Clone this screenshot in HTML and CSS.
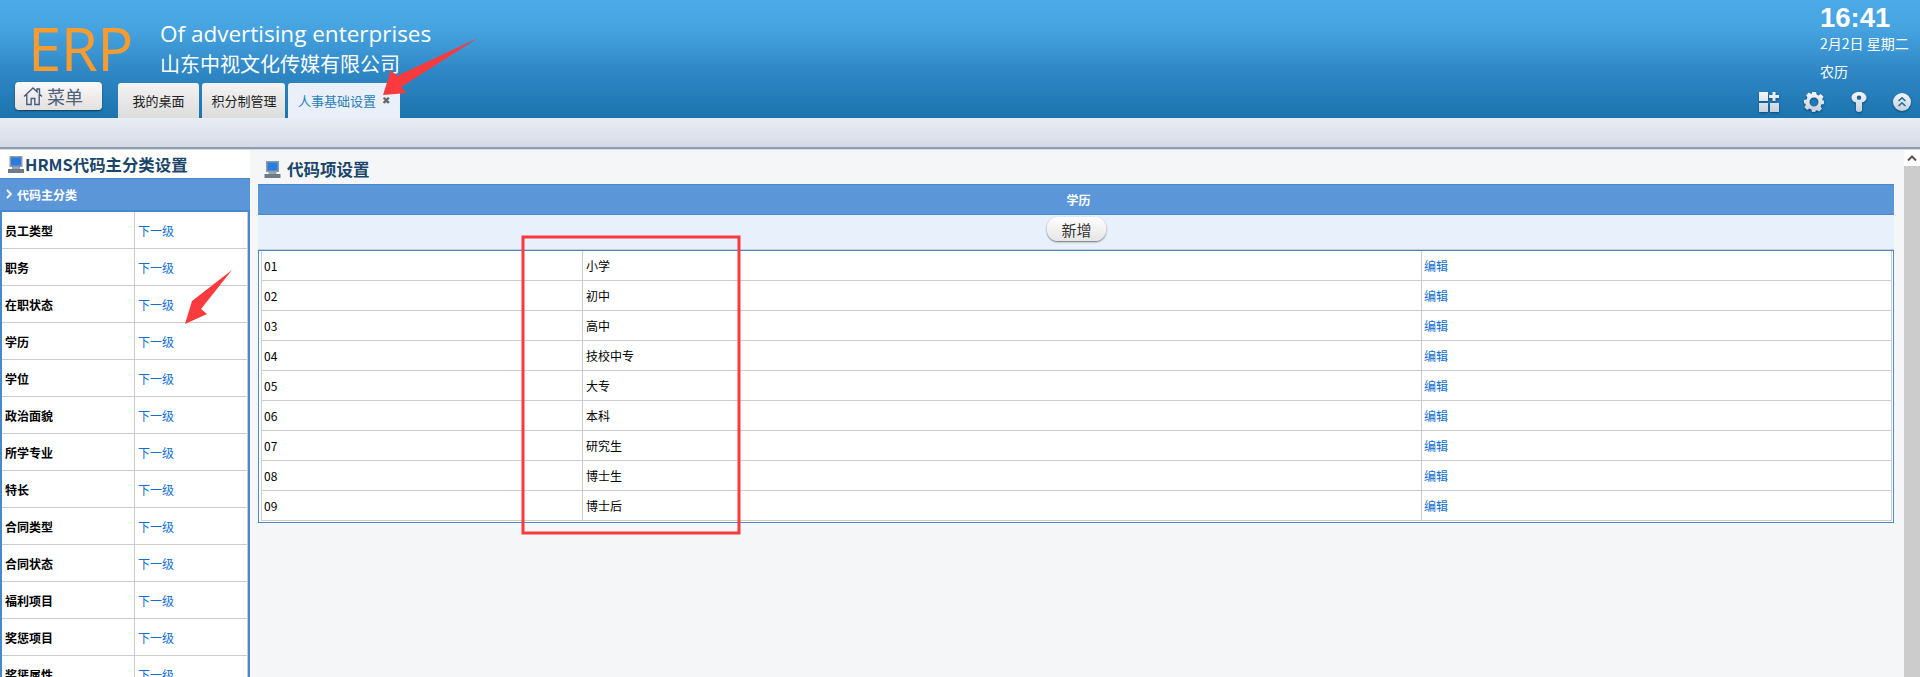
FILE: index.html
```html
<!DOCTYPE html>
<html lang="zh">
<head>
<meta charset="utf-8">
<title>人事基础设置</title>
<link rel="stylesheet" href="styles.css">
</head>
<body>
<header class="top">
  <div class="top-left">
    <div class="brand">
      <div class="erp">ERP</div>
      <div class="brand-text">
        <div class="en">Of advertising enterprises</div>
        <div class="cn">山东中视文化传媒有限公司</div>
      </div>
    </div>
    <div class="nav">
      <button class="menu-btn">
        <svg class="home" viewBox="0 0 20 20"><path d="M1 10.500 10 2l4 3.800V3h2.500v5.200L19 10.500M3.800 8.500V18.500h4.400v-6h3.600v6h4.400V8.500" fill="none" stroke="#44607f" stroke-width="1.400"/></svg>
        <span>菜单</span>
      </button>
      <div class="tabs">
        <div class="tab tab-a">我的桌面</div>
        <div class="tab tab-b">积分制管理</div>
        <div class="tab tab-active">人事基础设置<span class="close">✖</span></div>
      </div>
    </div>
  </div>
  <div class="top-right">
    <div class="time">16:41</div>
    <div class="date">2月2日 星期二</div>
    <div class="lunar">农历</div>
    <div class="tools">
      <svg class="tool" viewBox="0 0 20 20"><defs><linearGradient id="g" x1="0" y1="0" x2="0" y2="1"><stop offset="0" stop-color="#f4f6fa"/><stop offset="1" stop-color="#c6d0dc"/></linearGradient></defs><path d="M0 0h9v9H0zM0 11h9v9H0zM11 11h9v9h-9zM13.500 0h3v3h3.500v3h-3.500v3h-3V6H10V3h3.500z" fill="url(#g)"/></svg>
      <svg class="tool" viewBox="0 0 20 20"><path d="M8 0h4l.6 2.600 1.900.8 2.300-1.400 2.800 2.800-1.400 2.300.8 1.900L20 8v4l-2.600.6-.8 1.900 1.400 2.300-2.800 2.800-2.300-1.400-1.900.8L12 20H8l-.6-2.600-1.900-.8-2.300 1.400-2.800-2.800 1.400-2.300-.8-1.900L0 12V8l2.600-.6.8-1.900L2 3.200 4.800.4l2.300 1.400 1-.4zM10 5.500a4.500 4.500 0 1 0 0 9 4.500 4.500 0 0 0 0-9z" fill="url(#g)" fill-rule="evenodd"/></svg>
      <svg class="tool" viewBox="0 0 20 20"><path d="M10 0c4.500 0 7.500 2.500 7.500 5.500S15 10 13 10.500V18c0 1.200-1.300 2-3 2s-3-.8-3-2v-7.500C5 10 2.500 8.500 2.500 5.500S5.500 0 10 0zm0 3.500a2.200 2.200 0 1 0 0 4.400 2.200 2.200 0 0 0 0-4.400z" fill="url(#g)" fill-rule="evenodd"/></svg>
      <svg class="tool tool-small" viewBox="0 0 18 18"><circle cx="9" cy="9" r="9" fill="url(#g)"/><path d="M5.500 8 9 4.800 12.500 8M5.500 13 9 9.800l3.500 3.200" fill="none" stroke="#2a6f9f" stroke-width="1.600"/></svg>
    </div>
  </div>
</header>
<div class="subbar"></div>
<div class="content">
  <aside class="side">
    <h2 class="side-title">
      <svg class="pc" viewBox="0 0 16 18"><rect x="1.500" y="1" width="13" height="11" fill="#8c99a6"/><rect x="3" y="2.500" width="10" height="8" fill="#2a7de0"/><rect x="4" y="12" width="8" height="2" fill="#9aa5b0"/><rect x="0" y="14" width="16" height="4" fill="#6d7b88"/></svg>
      <span>HRMS代码主分类设置</span>
    </h2>
    <div class="side-box">
      <div class="side-head"><svg class="chev" viewBox="0 0 6 10"><path d="M1 1l4 4-4 4" fill="none" stroke="#fff" stroke-width="1.800"/></svg>代码主分类</div>
      <div class="side-row"><b>员工类型</b><a>下一级</a></div>
      <div class="side-row"><b>职务</b><a>下一级</a></div>
      <div class="side-row"><b>在职状态</b><a>下一级</a></div>
      <div class="side-row"><b>学历</b><a>下一级</a></div>
      <div class="side-row"><b>学位</b><a>下一级</a></div>
      <div class="side-row"><b>政治面貌</b><a>下一级</a></div>
      <div class="side-row"><b>所学专业</b><a>下一级</a></div>
      <div class="side-row"><b>特长</b><a>下一级</a></div>
      <div class="side-row"><b>合同类型</b><a>下一级</a></div>
      <div class="side-row"><b>合同状态</b><a>下一级</a></div>
      <div class="side-row"><b>福利项目</b><a>下一级</a></div>
      <div class="side-row"><b>奖惩项目</b><a>下一级</a></div>
      <div class="side-row"><b>奖惩属性</b><a>下一级</a></div>
    </div>
  </aside>
  <main class="main">
    <h2 class="main-title">
      <svg class="pc pc-large" viewBox="0 0 16 18"><rect x="1.500" y="1" width="13" height="11" fill="#8c99a6"/><rect x="3" y="2.500" width="10" height="8" fill="#2a7de0"/><rect x="4" y="12" width="8" height="2" fill="#9aa5b0"/><rect x="0" y="14" width="16" height="4" fill="#6d7b88"/></svg>
      <span>代码项设置</span>
    </h2>
    <div class="main-head">学历</div>
    <div class="toolbar"><button class="add">新增</button></div>
    <div class="grid-wrap">
      <div class="g-row"><span>01</span><span>小学</span><a>编辑</a></div>
      <div class="g-row"><span>02</span><span>初中</span><a>编辑</a></div>
      <div class="g-row"><span>03</span><span>高中</span><a>编辑</a></div>
      <div class="g-row"><span>04</span><span>技校中专</span><a>编辑</a></div>
      <div class="g-row"><span>05</span><span>大专</span><a>编辑</a></div>
      <div class="g-row"><span>06</span><span>本科</span><a>编辑</a></div>
      <div class="g-row"><span>07</span><span>研究生</span><a>编辑</a></div>
      <div class="g-row"><span>08</span><span>博士生</span><a>编辑</a></div>
      <div class="g-row"><span>09</span><span>博士后</span><a>编辑</a></div>
    </div>
  </main>
  <div class="scrollbar">
    <div class="sb-up"><svg viewBox="0 0 10 6"><path d="M1 5.500 5 1.500l4 4" fill="none" stroke="#555" stroke-width="2"/></svg></div>
    <div class="sb-thumb"></div>
  </div>
</div>
<svg class="marks" viewBox="0 0 1920 677">
  <path d="M383 95 407 93 401 87 478 38 397 76 391 70z" fill="#fb3a3d"/>
  <path d="M232 270 192 301 185 324 207 314 201 309z" fill="#fb3a3d"/>
  <rect x="523" y="237" width="216" height="296" fill="none" stroke="#f83a3d" stroke-width="3"/>
</svg>
</body>
</html>
```
FILE: styles.css
```css
* { box-sizing: border-box; }
html, body { margin: 0; height: 100%; overflow: hidden; }
body {
  position: relative;
  font-family: "Noto Sans CJK SC", "Open Sans", sans-serif;
  font-size: 12px;
  color: #000;
  background: #f5f6f8;
  display: flex;
  flex-direction: column;
  height: 677px;
}
h2 { margin: 0; }
a { color: #0f6fd2; }
button { font-family: inherit; padding: 0; }

.top {
  height: 118px;
  flex: none;
  display: flex;
  justify-content: space-between;
  background: linear-gradient(#4baae8 0%, #46a3e0 25%, #2f88c5 60%, #1c74ae 100%);
}
.top-left { display: flex; flex-direction: column; }
.brand { display: flex; height: 83px; padding-left: 28px; }
.erp {
  font-family: "Open Sans", sans-serif;
  font-weight: 400;
  font-size: 60px;
  line-height: 60px;
  margin-top: 18px;
  width: 132px;
  color: #f99c2f;
  letter-spacing: -0.500px;
}
.brand-text { color: #fff; padding-top: 19px; }
.en { font-family: "Open Sans", sans-serif; font-size: 22.500px; line-height: 30px; }
.cn { font-size: 20px; line-height: 30px; }
.nav { display: flex; height: 35px; padding-left: 15px; }
.menu-btn {
  width: 87px;
  height: 28px;
  margin-top: -1px;
  border: 0;
  border-radius: 4px;
  background: linear-gradient(#fafafa, #e4e0de);
  box-shadow: 0 1px 2px rgba(0,0,0,.5);
  color: #4d6178;
  font-size: 18px;
  display: flex;
  align-items: center;
  padding-left: 8px;
  gap: 4px;
}
.home { width: 20px; height: 20px; }
.tabs { display: flex; gap: 3px; margin-left: 16px; }
.tab {
  height: 35px;
  border-radius: 3px 3px 0 0;
  font-size: 13px;
  color: #222;
  background: linear-gradient(#f3f3f3, #dcdcdc);
  display: flex;
  align-items: center;
  justify-content: center;
}
.tab-a { width: 81px; }
.tab-b { width: 83px; padding-left: 1px; }
.tab-active {
  width: 112px;
  background: #e9f0f9;
  color: #2a7fb8;
  justify-content: flex-start;
  padding-left: 10px;
}
.close { font-size: 10px; color: #666; margin-left: 6px; font-family: "DejaVu Sans", sans-serif; }
.top-right {
  color: #fff;
  display: flex;
  flex-direction: column;
  width: 160px;
}
.time {
  font-family: "Liberation Sans", sans-serif;
  font-weight: bold;
  font-size: 27.500px;
  line-height: 27px;
  margin-top: 4px;
  padding-left: 60px;
}
.date { font-size: 14px; line-height: 20px; margin-top: 2px; padding-left: 60px; white-space: nowrap; }
.lunar { font-size: 14px; line-height: 20px; margin-top: 8px; padding-left: 60px; }
.tools {
  display: flex;
  align-items: center;
  margin-top: 11px;
  gap: 25px;
  margin-left: -1px;
}
.tool { width: 20px; height: 20px; filter: drop-shadow(0 1px 1px rgba(0,40,80,.6)); }
.tool-small { width: 18px; height: 18px; margin-left: -1px; }

.subbar {
  height: 31px;
  flex: none;
  margin-bottom: 1px;
  background: linear-gradient(#e9edf6, #d4dae5);
  border-bottom: 2px solid #8f9db0;
  box-shadow: 0 1px 0 #d3dbe6;
}
.content { flex: 1; display: flex; min-height: 0; }

.side { width: 250px; flex: none; background: #fff; }
.side-title {
  height: 28px;
  display: flex;
  align-items: center;
  padding-left: 8px;
  gap: 1px;
  font-size: 16.400px;
  line-height: 28px;
  color: #1b466b;
}
.pc { width: 16px; height: 18px; flex: none; }
.pc-large { width: 17px; height: 18px; }
.side-box { border: solid #4a88cc; border-width: 0 2px; }
.side-head {
  height: 34px;
  background: #5b96d9;
  border-top: 1px solid #4a88cc;
  border-bottom: 2px solid #4a88cc;
  margin: 0 -2px;
  padding: 0 0 1px 6px;
  color: #fff;
  font-weight: bold;
  display: flex;
  align-items: center;
}
.chev { width: 6px; height: 10px; margin-right: 5px; }
.side-row {
  height: 37px;
  display: grid;
  grid-template-columns: 133px 1fr;
  align-items: center;
  border-bottom: 1px solid #ccc;
  border-right: 1px solid #ccc;
}
.side-row b { padding: 1px 0 0 3px; height: 100%; line-height: 36px; border-right: 1px solid #ccc; }
.side-row a { padding: 0 0 0 3px; }

.main { flex: 1; min-width: 0; padding: 0 10px 0 8px; }
.main-title {
  height: 34px;
  display: flex;
  align-items: center;
  padding-left: 6px;
  gap: 6px;
  font-size: 16.500px;
  color: #1b466b;
  padding-top: 4px;
}
.main-head {
  height: 31px;
  background: #5b96d9;
  border-top: 1px solid #4a88cc;
  border-bottom: 1px solid #4a88cc;
  color: #fff;
  font-weight: bold;
  text-align: center;
  line-height: 29px;
  padding-left: 5px;
}
.toolbar {
  height: 35px;
  background: #e8f0fb;
  border-bottom: 1px solid #ccc;
  display: flex;
  justify-content: center;
  align-items: center;
  padding-left: 1px;
}
.add {
  width: 59px;
  height: 24px;
  margin-top: -6px;
  border: 0;
  border-radius: 11px;
  background: linear-gradient(#fff, #e5e5e5);
  box-shadow: 0 1px 2px rgba(0,0,0,.55);
  font-size: 15px;
  color: #333;
}
.grid-wrap {
  border: 1px solid #4a88cc;
  padding: 0 1px 1px 2px;
  background: #fff;
}
.g-row {
  height: 30px;
  display: grid;
  grid-template-columns: 320px 840px 1fr;
  align-items: center;
  border-bottom: 1px solid #ccc;
  border-right: 1px solid #ccc;
  border-left: 1px solid #ccc;
}
.g-row span, .g-row a { height: 100%; line-height: 29px; padding-left: 2px; }
.g-row span { border-right: 1px solid #ccc; }
.g-row span:first-child { border-right: 0; }
.g-row span:nth-child(2) { border-left: 1px solid #ccc; padding-left: 3px; }

.scrollbar { width: 16px; flex: none; display: flex; flex-direction: column; background: #fff; }
.sb-up { height: 16px; display: flex; align-items: center; justify-content: center; }
.sb-up svg { width: 10px; height: 6px; }
.sb-thumb { flex: 1; background: #ccc; }

.marks { position: absolute; left: 0; top: 0; width: 1920px; height: 677px; pointer-events: none; }
```
